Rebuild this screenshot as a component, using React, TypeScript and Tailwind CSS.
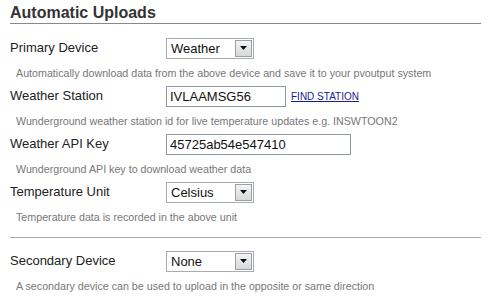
import React from 'react';

function Select({ value }: { value: string }) {
  return (
    <div className="flex h-[21px] w-[88px] items-center border border-[#a5acb2] bg-white">
      <span className="flex-1 pl-[4px] text-[13px] leading-none text-[#111]">{value}</span>
      <span className="mr-[1px] flex h-[17px] w-[17px] items-center justify-center border border-[#9aa0a6] bg-gradient-to-b from-[#f4f4f4] to-[#d8d8d8]">
        <svg width="7" height="4" viewBox="0 0 7 4">
          <path d="M0 0h7L3.5 4z" fill="#111" />
        </svg>
      </span>
    </div>
  );
}

function TextBox({ value, width }: { value: string; width: string }) {
  return (
    <div className={`flex h-[21px] items-center border border-[#8e9aa6] bg-white pl-[3px] text-[13px] leading-none text-[#111] ${width}`}>
      {value}
    </div>
  );
}

function Row({ label, children }: { label: string; children: React.ReactNode }) {
  return (
    <div className="flex h-[22px] items-center">
      <div className="w-[156px] text-[13px] text-[#222]">{label}</div>
      {children}
    </div>
  );
}

function Help({ children }: { children: React.ReactNode }) {
  return <div className="mt-[7px] mb-[5px] h-[14px] pl-[6px] text-[10.7px] leading-[14px] text-[#777]">{children}</div>;
}

export default function App() {
  return (
    <div className="h-[298px] w-[488px] overflow-hidden bg-white px-[10px] pt-[4px] font-['Liberation_Sans',Arial,sans-serif]">
      <h1 className="h-[18px] text-[16px] font-bold leading-[18px] text-[#333]">Automatic Uploads</h1>
      <div className="mt-[1px] h-[1px] w-[471px] bg-[#888]" />

      <div className="mt-[13px]">
        <Row label="Primary Device">
          <Select value="Weather" />
        </Row>
        <Help>Automatically download data from the above device and save it to your pvoutput system</Help>

        <Row label="Weather Station">
          <TextBox value="IVLAAMSG56" width="w-[120px]" />
          <a href="#" className="ml-[5px] text-[10px] text-[#1a1a9a] underline">FIND STATION</a>
        </Row>
        <Help>Wunderground weather station id for live temperature updates e.g. INSWTOON2</Help>

        <Row label="Weather API Key">
          <TextBox value="45725ab54e547410" width="w-[185px]" />
        </Row>
        <Help>Wunderground API key to download weather data</Help>

        <Row label="Temperature Unit">
          <Select value="Celsius" />
        </Row>
        <Help>Temperature data is recorded in the above unit</Help>
      </div>

      <div className="mt-[13px] h-[1px] w-[471px] bg-[#aaa]" />

      <div className="mt-[12px]">
        <Row label="Secondary Device">
          <Select value="None" />
        </Row>
        <Help>A secondary device can be used to upload in the opposite or same direction</Help>
      </div>
    </div>
  );
}
